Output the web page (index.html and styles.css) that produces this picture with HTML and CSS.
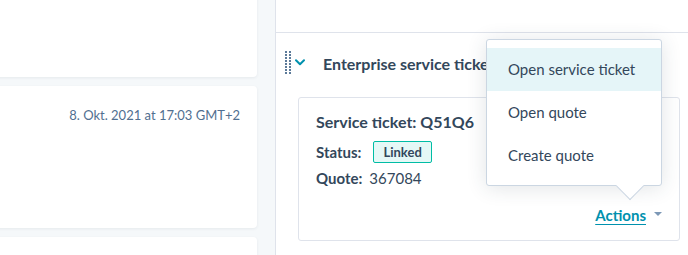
FILE: index.html
```html
<!DOCTYPE html>
<html lang="en">
<head>
  <meta charset="UTF-8">
  <meta name="viewport" content="width=device-width, initial-scale=1.0">
  <title>Service ticket</title>
  <link rel="stylesheet" href="styles.css">
</head>
<body>

  <!-- Timeline -->
  <main class="timeline">
    <div class="card card-top"></div>
    <div class="card card-event">
      <div class="event-date">8. Okt. 2021 at 17:03 GMT+2</div>
    </div>
    <div class="card card-next"></div>
  </main>

  <!-- Sidebar -->
  <aside class="sidebar">
    <div class="sidebar-top"></div>

    <section class="assoc">
      <div class="assoc-head">
        <svg class="handle" width="6" height="23" viewBox="0 0 6 23">
          <g fill="#5c7a99">
            <rect x="0" y="0" width="2" height="2"/><rect x="4" y="0" width="2" height="2"/>
            <rect x="0" y="3" width="2" height="2"/><rect x="4" y="3" width="2" height="2"/>
            <rect x="0" y="6" width="2" height="2"/><rect x="4" y="6" width="2" height="2"/>
            <rect x="0" y="9" width="2" height="2"/><rect x="4" y="9" width="2" height="2"/>
            <rect x="0" y="12" width="2" height="2"/><rect x="4" y="12" width="2" height="2"/>
            <rect x="0" y="15" width="2" height="2"/><rect x="4" y="15" width="2" height="2"/>
            <rect x="0" y="18" width="2" height="2"/><rect x="4" y="18" width="2" height="2"/>
            <rect x="0" y="21" width="2" height="2"/><rect x="4" y="21" width="2" height="2"/>
          </g>
        </svg>
        <svg class="chevron" width="10" height="7" viewBox="0 0 10 7">
          <polyline points="1,1.2 5,5.2 9,1.2" fill="none" stroke="#0091ae" stroke-width="2" stroke-linecap="round" stroke-linejoin="round"/>
        </svg>
        <h3>Enterprise service ticket</h3>
      </div>

      <div class="ticket-card">
        <div class="ticket-title">Service ticket: Q51Q6</div>
        <div class="ticket-row status-row">
          <span class="label">Status:</span>
          <span class="tag">Linked</span>
        </div>
        <div class="ticket-row quote-row">
          <span class="label">Quote:</span>
          <span class="value">367084</span>
        </div>
        <div class="actions-row">
          <a href="#" class="actions">Actions</a>
          <svg class="caret" width="8" height="4" viewBox="0 0 8 4">
            <polygon points="0,0 8,0 4,4" fill="#7c98b6"/>
          </svg>
        </div>
      </div>
    </section>

    <!-- Actions menu -->
    <div class="menu">
      <div class="menu-item active">Open service ticket</div>
      <div class="menu-item">Open quote</div>
      <div class="menu-item">Create quote</div>
      <span class="menu-arrow"></span>
    </div>
  </aside>

</body>
</html>
```

FILE: styles.css
```css
* {
  box-sizing: border-box;
}

body {
  margin: 0;
  height: 255px;
  overflow: hidden;
  font-family: Lato, 'Open Sans', sans-serif;
  color: #33475b;
  background: #f5f8fa;
  display: flex;
}

.timeline {
  width: 275px;
  flex-shrink: 0;
  padding-right: 18px;
  display: flex;
  flex-direction: column;
  gap: 9px;
}

.card {
  flex-shrink: 0;
  background: #fff;
  margin-left: -10px;
  border-radius: 4px;
  box-shadow: 0 1px 3px rgba(45, 62, 80, 0.08);
}

.card-top {
  margin-top: -6px;
  height: 83px;
}

.card-event {
  height: 142px;
  padding: 21px 17px 0 0;
}

.card-next {
  height: 18px;
  border-radius: 4px 4px 0 0;
}

.event-date {
  text-align: right;
  font-size: 13px;
  line-height: 16px;
  color: #516f90;
}

.sidebar {
  position: relative;
  flex: 1;
  background: #fff;
  border-left: 1px solid #dfe3eb;
}

.sidebar-top {
  height: 33px;
  border-bottom: 1px solid #dfe3eb;
}

.assoc {
  padding: 17px 8px 0 9px;
}

.assoc-head {
  display: flex;
  align-items: center;
  height: 24px;
}

.chevron {
  margin-left: 4px;
}

.assoc-head h3 {
  margin: 0 0 0 18px;
  font-size: 16px;
  font-weight: 700;
  white-space: nowrap;
  line-height: 20px;
  padding-top: 3px;
}

.ticket-card {
  margin: 23px 0 0 13px;
  border: 1px solid #dfe3eb;
  border-radius: 3px;
  padding: 14px 17px 15px 17px;
}

.ticket-title {
  font-size: 16px;
  font-weight: 700;
  line-height: 20px;
}

.ticket-row {
  display: flex;
  align-items: center;
  font-size: 15px;
}

.label {
  font-weight: 700;
}

.status-row {
  margin-top: 9px;
  height: 22px;
}

.tag {
  margin-left: 12px;
  height: 22px;
  line-height: 20px;
  padding: 0 9px;
  border: 1px solid #00bda5;
  background: #e5f8f6;
  font-size: 13px;
  font-weight: 700;
  border-radius: 2px;
}

.quote-row {
  margin-top: 5px;
  line-height: 20px;
}

.value {
  margin-left: 7px;
}

.actions-row {
  margin-top: 17px;
  display: flex;
  justify-content: flex-end;
  align-items: center;
  height: 20px;
}

.actions {
  font-size: 15px;
  font-weight: 700;
  color: #0091ae;
  text-decoration: underline;
  text-underline-offset: 3px;
}

.caret {
  margin-left: 8px;
  margin-top: -2px;
}

.menu {
  position: absolute;
  left: 210px;
  top: 39px;
  width: 176px;
  padding: 8px 0;
  background: #fff;
  border: 1px solid #cbd6e2;
  border-radius: 3px;
  box-shadow: 0 2px 20px rgba(45, 62, 80, 0.14);
}

.menu-item {
  height: 43px;
  line-height: 43px;
  padding-left: 21px;
  font-size: 15px;
  color: #33475b;
}

.menu-item.active {
  background: #e5f5f8;
}

.menu-arrow {
  position: absolute;
  left: 133px;
  bottom: -11px;
  width: 20px;
  height: 20px;
  background: #fff;
  border-right: 1px solid #cbd6e2;
  border-bottom: 1px solid #cbd6e2;
  transform: rotate(45deg);
}
```
